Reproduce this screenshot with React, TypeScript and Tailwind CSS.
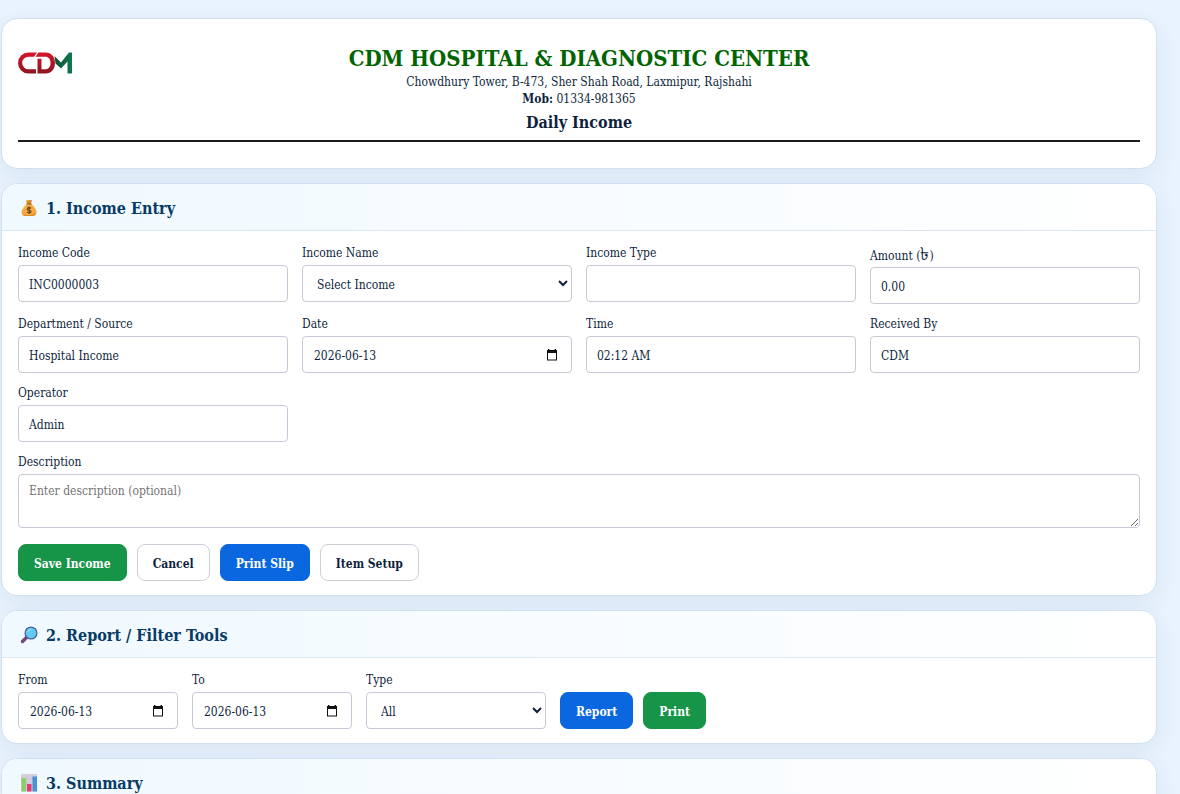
import React from 'react';

const entryFields = [
  { id: 'income-code', label: 'Income Code', value: 'INC0000003', kind: 'text' },
  { id: 'income-name', label: 'Income Name', value: 'Select Income', kind: 'select' },
  { id: 'income-type', label: 'Income Type', value: '', kind: 'text' },
  { id: 'amount', label: 'Amount', unit: '৳', value: '0.00', kind: 'text' },
  { id: 'department', label: 'Department / Source', value: 'Hospital Income', kind: 'text' },
  { id: 'date', label: 'Date', value: '2026-06-13', kind: 'date' },
  { id: 'time', label: 'Time', value: '02:12 AM', kind: 'text' },
  { id: 'received-by', label: 'Received By', value: 'CDM', kind: 'text' },
  { id: 'operator', label: 'Operator', value: 'Admin', kind: 'text' },
];

const controlClass = 'h-[37px] w-full rounded border border-[#c6cad6] bg-white px-2.5 pt-0.5';

const CalendarIcon = () => (
  <svg width="12" height="12" viewBox="0 0 12 12" aria-hidden="true">
    <path d="M2 0h1.500v1h5V0H10v1h1v10.500H1V1h1zM2 4v6.500h8V4z" fill="#111" fillRule="evenodd" />
  </svg>
);

const Logo = () => (
  <svg width="54" height="24" viewBox="0 0 54 24" role="img" aria-label="CDM logo">
    <defs>
      <linearGradient id="logo-red" x1="0" y1="0" x2="0" y2="1">
        <stop offset="0" stopColor="#d8152c" />
        <stop offset="1" stopColor="#8d1620" />
      </linearGradient>
      <linearGradient id="logo-green" x1="0" y1="0" x2="1" y2="0">
        <stop offset="0" stopColor="#0b4f38" />
        <stop offset="1" stopColor="#10784f" />
      </linearGradient>
    </defs>
    <g fill="url(#logo-red)">
      <path d="M10.500 1.500h8.500l-3 4.200h-5.500a6.300 6.300 0 0 0 0 12.600h7.500v4.200h-7.500a10.500 10.500 0 0 1 0-21z" />
      <path d="M20.500 1.500h7c6 0 9.500 4.500 9.500 10.500s-3.500 10.500-9.500 10.500h-8V7.800h4v10.500h3.700c3.600 0 5.300-2.600 5.300-6.300s-1.700-6.300-5.300-6.300H17.500z" />
    </g>
    <path d="M36.500 5l6.500 6.500L51 1.500h3v21h-4.500v-12L43 17.500l-5.500-5z" fill="url(#logo-green)" />
  </svg>
);

const MoneyBagIcon = () => (
  <svg width="18" height="18" viewBox="0 0 18 18" aria-hidden="true">
    <path d="M6 1l2 .6L9.500 1l2.500.3L11 5H7z" fill="#d98b2b" />
    <path d="M7 5h4c3 2 5.500 5.500 5.500 8.500 0 2.500-2 3.500-3.500 3.500H5c-1.500 0-3.500-1-3.500-3.500C1.500 10.500 4 7 7 5z" fill="#f5a941" />
    <path d="M3 10c1-2 2.500-3.600 4.500-4.500" stroke="#ffd36b" fill="none" />
    <path d="M3 15c3 1.500 9 1.500 12.500-1-.5 2.200-1.500 3-3 3H5c-1 0-2-.8-2-2z" fill="#e08a2a" />
    <path d="M6.500 5h5" stroke="#8c5a2b" />
    <path d="M11 9.300C10.300 8.300 7.300 8.300 7.300 10c0 1.800 3.700.8 3.700 2.600 0 1.600-3 1.600-3.900.4M9.100 7.500V15" stroke="#6b4526" strokeWidth="1.200" fill="none" />
  </svg>
);

const SearchIcon = () => (
  <svg width="18" height="18" viewBox="0 0 18 18" aria-hidden="true">
    <path d="M2.500 15.500l4.500-4.500" stroke="#704a75" strokeWidth="3.500" strokeLinecap="round" />
    <circle cx="11" cy="7" r="5.900" fill="#62c9f0" stroke="#45649a" strokeWidth="1.300" />
    <path d="M7.500 6c.7-1.700 2-2.500 3.600-2.500" stroke="#a2e5fb" fill="none" />
  </svg>
);

const ChartIcon = () => (
  <svg width="18" height="18" viewBox="0 0 18 18" aria-hidden="true">
    <rect x="1" y="0" width="16" height="17.500" rx="1" fill="#d5cfdf" />
    <path d="M1 5h16M1 10h16M7 1v16M12 1v16" stroke="#c8c3d5" />
    <rect x="1.500" y="4" width="4.500" height="13.500" fill="#8bcf68" />
    <rect x="7" y="10" width="4.500" height="7.500" fill="#e13b78" />
    <rect x="12.500" y="2.500" width="4.500" height="15" fill="#4a91d6" />
  </svg>
);

interface FieldProps {
  id: string;
  label: string;
  unit?: string;
  value: string;
  kind: string;
  className?: string;
}

const Field: React.FC<FieldProps> = ({ id, label, unit, value, kind, className = '' }) => (
  <div className={`flex flex-col gap-1 ${className}`}>
    <label htmlFor={id} className={unit ? 'h-[18px] leading-5' : 'h-4 leading-[17px]'}>
      {label}
      {unit && (
        <>
          {' '}(<span className="text-[18px] leading-none">{unit}</span>)
        </>
      )}
    </label>
    {kind === 'text' && <input id={id} type="text" defaultValue={value} className={controlClass} />}
    {kind === 'select' && (
      <select id={id} defaultValue={value} className="h-[37px] w-full rounded border border-[#c6cad6] bg-white pt-0.5 pl-2.5">
        <option>{value}</option>
      </select>
    )}
    {kind === 'date' && (
      <div className="flex h-[37px] items-center rounded border border-[#c6cad6] bg-white pr-[13px] pl-[11px]">
        <input id={id} type="text" defaultValue={value} className="h-full min-w-0 flex-1 pt-0.5 outline-none" />
        <button type="button" aria-label={`Choose ${label} date`}>
          <CalendarIcon />
        </button>
      </div>
    )}
  </div>
);

const buttonStyles = {
  green: 'border-[#169447] bg-[#169447] text-white',
  blue: 'border-[#0b67df] bg-[#0b67df] text-white',
  plain: 'border-[#cbd0d8] bg-white text-[#0f1f3d]',
};

interface ButtonProps {
  variant: keyof typeof buttonStyles;
  children: React.ReactNode;
}

const Button: React.FC<ButtonProps> = ({ variant, children }) => (
  <button
    type="button"
    className={`h-[37px] rounded-lg border px-[15px] pt-0.5 text-[12px] font-bold whitespace-nowrap ${buttonStyles[variant]}`}
  >
    {children}
  </button>
);

const cardClass = 'overflow-hidden rounded-2xl border border-[#d0e0f0] bg-white shadow-[0_8px_24px_rgba(30,60,90,0.07)]';

interface SectionProps {
  icon: React.ReactNode;
  title: string;
  children?: React.ReactNode;
}

const Section: React.FC<SectionProps> = ({ icon, title, children }) => (
  <section className={cardClass}>
    <header className="flex h-[47px] items-center gap-2 border-b border-[#dde7f1] bg-linear-to-r from-[#f0f9ff] to-white px-[18px] pt-0.5">
      {icon}
      <h2 className="pt-0.5 text-[16px] leading-5 font-bold text-[#073b66]">{title}</h2>
    </header>
    {children && <div className="px-4 py-3.5">{children}</div>}
  </section>
);

const App: React.FC = () => {
  return (
    <div className="min-h-screen bg-[#e8f3fe] pt-[18px] pr-[23px] pl-px font-['DejaVu_Serif_Condensed','DejaVu_Serif',serif] text-[12px] text-[#0f1f3d]">
      <main className="flex flex-col gap-3.5">
        <header className={`${cardClass} px-4 pb-[26px]`}>
          <div className="grid grid-cols-[1fr_auto_1fr] items-start border-b-2 border-[#1b1b20] pt-6 pb-1.5">
            <div className="pt-2">
              <Logo />
            </div>
            <div className="text-center leading-[17px]">
              <h1 className="pb-px text-[22px] leading-[30px] font-bold text-[#006400]">CDM HOSPITAL &amp; DIAGNOSTIC CENTER</h1>
              <p>Chowdhury Tower, B-473, Sher Shah Road, Laxmipur, Rajshahi</p>
              <p>
                <b>Mob:</b> 01334-981365
              </p>
              <p className="pt-1 text-[16px] leading-[22px] font-bold">Daily Income</p>
            </div>
          </div>
        </header>

        <Section icon={<MoneyBagIcon />} title="1. Income Entry">
          <form>
            <div className="grid grid-cols-4 gap-x-3.5 gap-y-3">
              {entryFields.map((field) => (
                <Field key={field.id} {...field} />
              ))}
              <div className="col-span-4 flex flex-col gap-1">
                <label htmlFor="description" className="h-4 leading-[17px]">
                  Description
                </label>
                <textarea
                  id="description"
                  placeholder="Enter description (optional)"
                  className="h-[54px] w-full resize-y rounded border border-[#c6cad6] px-2.5 py-[7px] placeholder:text-[#757575]"
                />
              </div>
            </div>
            <div className="mt-4 flex gap-2.5">
              <Button variant="green">Save Income</Button>
              <Button variant="plain">Cancel</Button>
              <Button variant="blue">Print Slip</Button>
              <Button variant="plain">Item Setup</Button>
            </div>
          </form>
        </Section>

        <Section icon={<SearchIcon />} title="2. Report / Filter Tools">
          <form className="flex items-end gap-3.5">
            <Field id="from" label="From" value="2026-06-13" kind="date" className="w-40" />
            <Field id="to" label="To" value="2026-06-13" kind="date" className="w-40" />
            <Field id="type" label="Type" value="All" kind="select" className="w-[180px]" />
            <div className="flex gap-2.5">
              <Button variant="blue">Report</Button>
              <Button variant="green">Print</Button>
            </div>
          </form>
        </Section>

        <Section icon={<ChartIcon />} title="3. Summary" />
      </main>
    </div>
  );
};

export default App;
